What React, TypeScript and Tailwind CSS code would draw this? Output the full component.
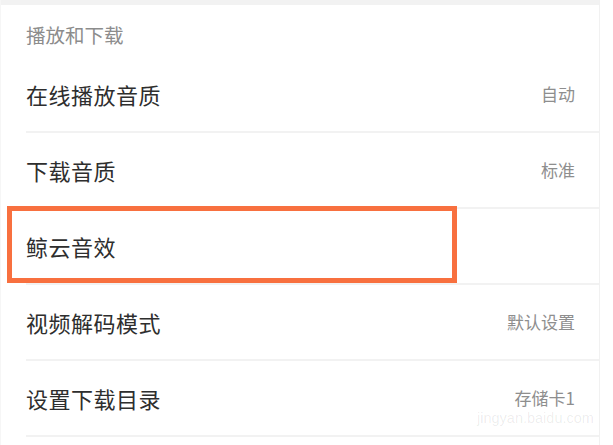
import React from "react";

const rows: { label: string; value: string }[] = [
  { label: "在线播放音质", value: "自动" },
  { label: "下载音质", value: "标准" },
  { label: "鲸云音效", value: "" },
  { label: "视频解码模式", value: "默认设置" },
  { label: "设置下载目录", value: "存储卡1" },
];

export default function App() {
  return (
    <div
      className="relative w-[613px] h-[445px] bg-white overflow-hidden"
      style={{ fontFamily: '"Noto Sans CJK SC", "Noto Sans", sans-serif' }}
    >
      <div className="w-[600px] h-[445px] border-r border-[#f1f1f1] border-l border-l-[#f6f6f6] flex flex-col">
        <div className="h-[5px] bg-[#f2f2f2]" />
        <div className="h-[52px] flex items-center pt-[8px] pl-[25px] text-[19.5px] text-[#8c8c8c]">
          播放和下载
        </div>
        {rows.map((r) => (
          <div
            key={r.label}
            className="ml-[25px] h-[76px] shrink-0 border-b-2 border-[#f2f2f2] flex items-center justify-between pr-[24px]"
          >
            <span className="text-[22px] text-[#2e2e2e] tracking-[0.5px]">{r.label}</span>
            <span className="text-[17px] text-[#8e8e8e]">{r.value}</span>
          </div>
        ))}
      </div>
      <div className="absolute left-[7px] top-[206px] w-[450px] h-[77px] border-[5px] border-[#f8703f]" />
      <div
        className="absolute left-[477px] top-[411px] text-[14.5px] leading-none text-[#000000]/[0.08]"
        style={{ fontFamily: '"Liberation Sans", sans-serif' }}
      >
        jingyan.baidu.com
      </div>
    </div>
  );
}
